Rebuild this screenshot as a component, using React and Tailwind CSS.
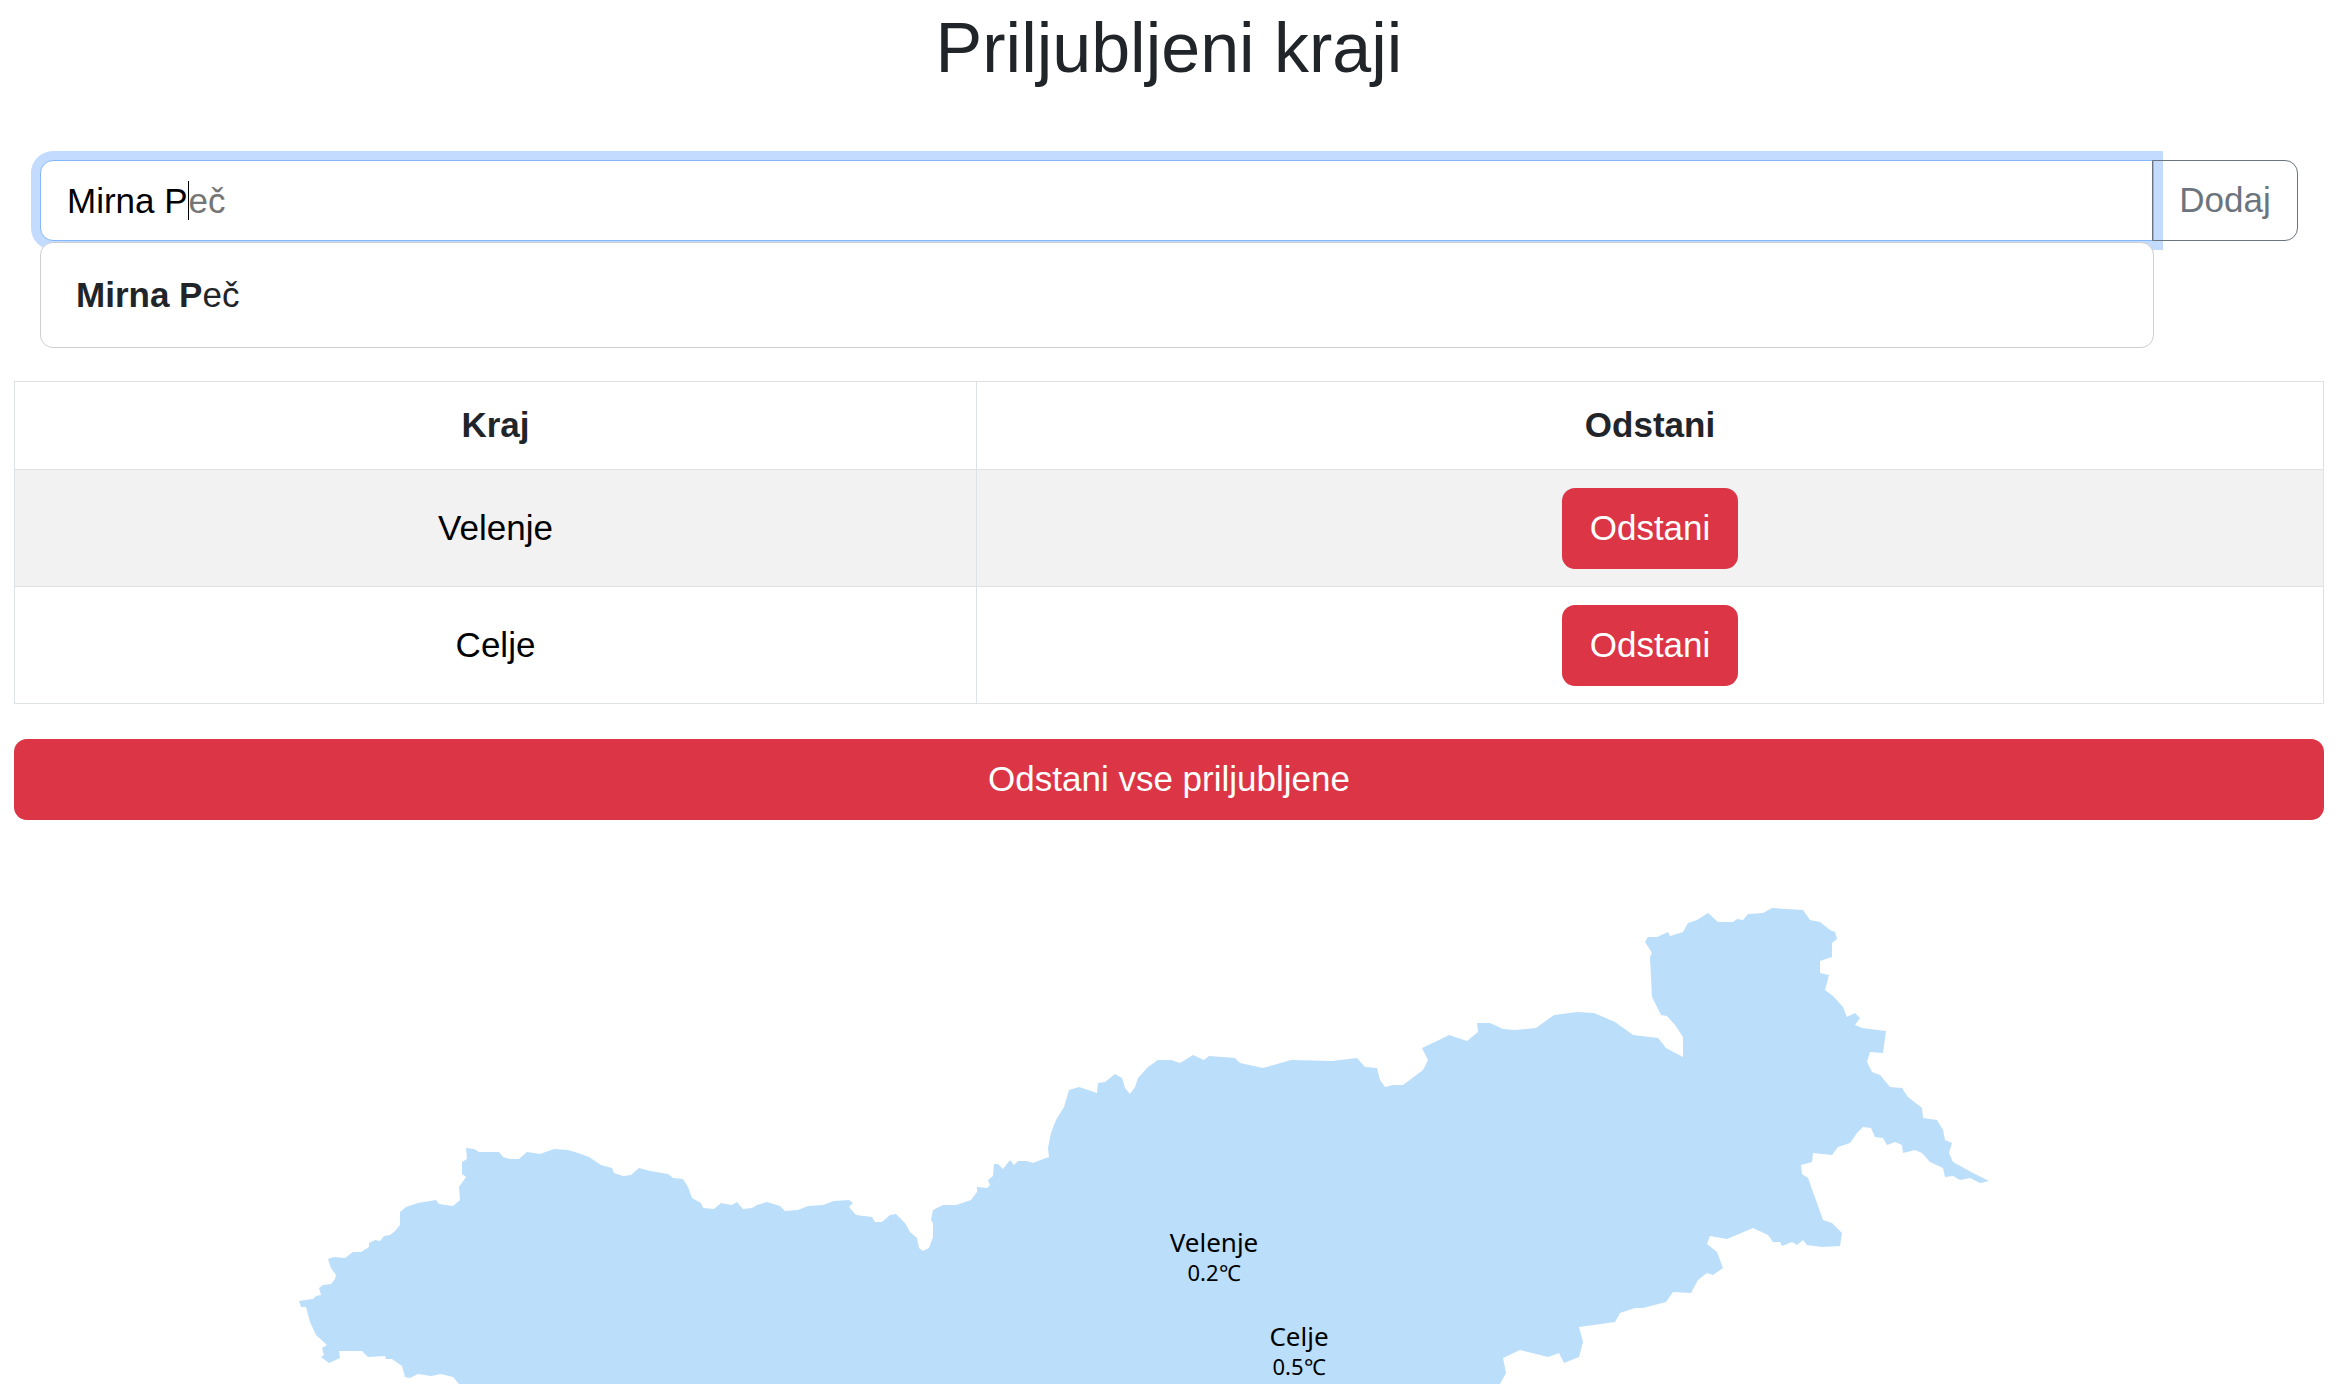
import React from 'react';

// map outline traced from the reference, in page coordinates
const outline = [
  [299,1301],[313,1299],[316,1296],[321,1295],[319,1288],[323,1285],[331,1284],[335,1279],[336,1275],[331,1268],[328,1259],[334,1257],[345,1258],[353,1252],[361,1252],[369,1247],[369,1243],[375,1240],[380,1241],[384,1236],[390,1235],[395,1231],[400,1225],[400,1212],[406,1207],[418,1203],[436,1200],[439,1204],[453,1206],[460,1200],[459,1187],[466,1177],[462,1174],[462,1162],[467,1159],[466,1148],[474,1149],[479,1152],[499,1152],[503,1157],[510,1159],[519,1159],[527,1152],[540,1154],[554,1149],[568,1150],[578,1153],[589,1157],[601,1165],[612,1168],[614,1173],[623,1176],[631,1175],[639,1168],[650,1171],[668,1174],[673,1178],[683,1179],[688,1187],[692,1198],[701,1203],[703,1208],[714,1209],[721,1203],[732,1205],[737,1202],[743,1209],[752,1208],[757,1205],[767,1202],[780,1206],[785,1211],[798,1210],[808,1206],[823,1205],[834,1201],[849,1200],[853,1203],[849,1207],[856,1215],[872,1217],[875,1222],[882,1222],[890,1215],[896,1214],[905,1223],[910,1232],[917,1238],[919,1248],[923,1251],[929,1248],[933,1237],[933,1223],[931,1220],[933,1210],[943,1205],[956,1205],[971,1200],[977,1192],[977,1187],[987,1188],[990,1185],[988,1180],[993,1176],[994,1164],[998,1164],[1003,1169],[1010,1160],[1014,1165],[1018,1161],[1027,1161],[1033,1163],[1043,1159],[1049,1157],[1048,1148],[1051,1133],[1056,1120],[1064,1107],[1069,1090],[1079,1087],[1097,1093],[1098,1083],[1105,1082],[1115,1074],[1122,1078],[1125,1088],[1130,1094],[1135,1087],[1138,1078],[1148,1067],[1158,1060],[1171,1060],[1180,1063],[1193,1055],[1204,1060],[1209,1056],[1235,1058],[1240,1063],[1263,1068],[1291,1060],[1332,1061],[1357,1058],[1365,1067],[1377,1068],[1380,1080],[1385,1087],[1393,1085],[1403,1085],[1423,1070],[1428,1060],[1422,1048],[1439,1040],[1449,1035],[1467,1041],[1478,1032],[1477,1023],[1490,1023],[1503,1029],[1515,1030],[1536,1028],[1554,1015],[1577,1012],[1594,1013],[1615,1022],[1633,1035],[1658,1038],[1666,1048],[1683,1057],[1683,1037],[1675,1025],[1667,1016],[1661,1015],[1652,997],[1650,957],[1652,953],[1645,942],[1648,937],[1657,937],[1668,932],[1670,936],[1683,932],[1688,923],[1697,920],[1708,913],[1718,922],[1733,922],[1737,919],[1743,920],[1748,914],[1763,913],[1772,908],[1803,910],[1810,920],[1820,922],[1830,930],[1835,932],[1837,939],[1832,943],[1832,957],[1820,961],[1820,973],[1829,975],[1825,990],[1833,996],[1843,1007],[1847,1017],[1855,1013],[1860,1018],[1855,1025],[1862,1028],[1886,1031],[1883,1053],[1870,1052],[1867,1062],[1872,1072],[1880,1075],[1890,1087],[1902,1088],[1908,1097],[1922,1108],[1923,1118],[1937,1120],[1943,1130],[1945,1140],[1952,1143],[1949,1153],[1953,1162],[1973,1173],[1989,1181],[1980,1183],[1970,1178],[1960,1180],[1953,1176],[1945,1177],[1943,1168],[1930,1162],[1922,1153],[1915,1150],[1903,1153],[1902,1145],[1895,1142],[1887,1145],[1883,1138],[1875,1137],[1871,1128],[1863,1127],[1857,1133],[1850,1143],[1838,1147],[1832,1155],[1813,1153],[1812,1162],[1801,1165],[1802,1174],[1808,1178],[1813,1192],[1817,1203],[1823,1220],[1832,1223],[1842,1233],[1840,1246],[1822,1247],[1807,1245],[1803,1240],[1797,1245],[1792,1242],[1782,1246],[1780,1242],[1773,1242],[1768,1235],[1753,1228],[1727,1239],[1710,1236],[1707,1244],[1717,1252],[1723,1268],[1713,1275],[1707,1273],[1698,1280],[1691,1293],[1673,1292],[1666,1302],[1643,1308],[1635,1308],[1620,1313],[1615,1322],[1579,1327],[1583,1342],[1579,1357],[1564,1363],[1559,1353],[1548,1357],[1520,1350],[1503,1358],[1506,1373],[1500,1384],[459,1384],[453,1377],[441,1374],[431,1376],[418,1374],[410,1378],[405,1377],[402,1366],[392,1359],[386,1359],[385,1356],[368,1357],[362,1351],[339,1351],[340,1358],[329,1363],[321,1357],[324,1355],[322,1348],[327,1345],[316,1335],[310,1322],[306,1307],[301,1307],
];

const favourites = ['Velenje', 'Celje'];

function MapLabel({ x, y, name, temp }) {
    return (
        <g textAnchor="middle" fill="#000">
            <text x={x} y={y} fontSize="26" fontFamily="'Noto Sans', sans-serif">{name}</text>
            <text x={x} y={y + 29} fontSize="22" fontFamily="'Noto Sans', sans-serif">
                {temp}<tspan fontFamily="'Liberation Serif', serif">℃</tspan>
            </text>
        </g>
    );
}

export default function App() {
    return (
        <div className="h-[1384px] overflow-hidden bg-white pr-[15px] pl-[14px] font-['Liberation_Sans',Arial,sans-serif] text-[35px] text-[#212529]">
            <h1 className="pt-[5px] pb-[69px] text-center text-[70px] font-normal leading-[86px]">Priljubljeni kraji</h1>

            {/* Search with suggestion */}
            <div className="mr-[26px] ml-[26px]">
                <div className="flex h-[81px]">
                    <div className="relative z-10 flex w-[2114px] items-center rounded-l-[13px] border border-[#86b7fe] bg-white px-[26px] leading-[51px] text-black shadow-[0_0_0_9px_#c2dbfe]">
                        <span>Mirna P</span>
                        <span className="h-[39px] w-px bg-black" />
                        <span className="text-[#757575]">eč</span>
                    </div>
                    <button className="relative z-20 -ml-[2px] flex flex-1 items-center justify-center rounded-r-[13px] border border-[#6c757d] text-[#6c757d]">Dodaj</button>
                </div>
                <div className="relative z-20 mt-px flex h-[106px] w-[2114px] items-center rounded-[13px] border border-[#cfcfcf] bg-white px-[35px]">
                    <span><span className="font-bold">Mirna P</span>eč</span>
                </div>
            </div>

            {/* Favourites */}
            <table className="mt-[33px] w-full table-fixed border-collapse text-center">
                <colgroup>
                    <col className="w-[962px]" />
                    <col />
                </colgroup>
                <thead>
                    <tr className="h-[88px]">
                        <th className="border border-[#dee2e6] font-bold">Kraj</th>
                        <th className="border border-[#dee2e6] font-bold">Odstani</th>
                    </tr>
                </thead>
                <tbody>
                    {favourites.map((name, i) => (
                        <tr key={name} className={i === 0 ? 'h-[117px] bg-[#f2f2f2]' : 'h-[117px]'}>
                            <td className="border border-[#dee2e6] text-black">{name}</td>
                            <td className="border border-[#dee2e6]">
                                <button className="h-[81px] rounded-[13px] bg-[#dc3545] px-[27.5px] text-white">Odstani</button>
                            </td>
                        </tr>
                    ))}
                </tbody>
            </table>

            <button className="mt-[35px] block h-[81px] w-full rounded-[13px] bg-[#dc3545] text-white">Odstani vse priljubljene</button>

            {/* Map */}
            <svg viewBox="14 820 2309 564" className="block h-[564px] w-[2309px]">
                <polygon points={outline.map(p => p.join(',')).join(' ')} fill="#bbdefb" />
                <MapLabel x={1214} y={1252} name="Velenje" temp="0.2" />
                <MapLabel x={1299} y={1346} name="Celje" temp="0.5" />
            </svg>
        </div>
    );
}
